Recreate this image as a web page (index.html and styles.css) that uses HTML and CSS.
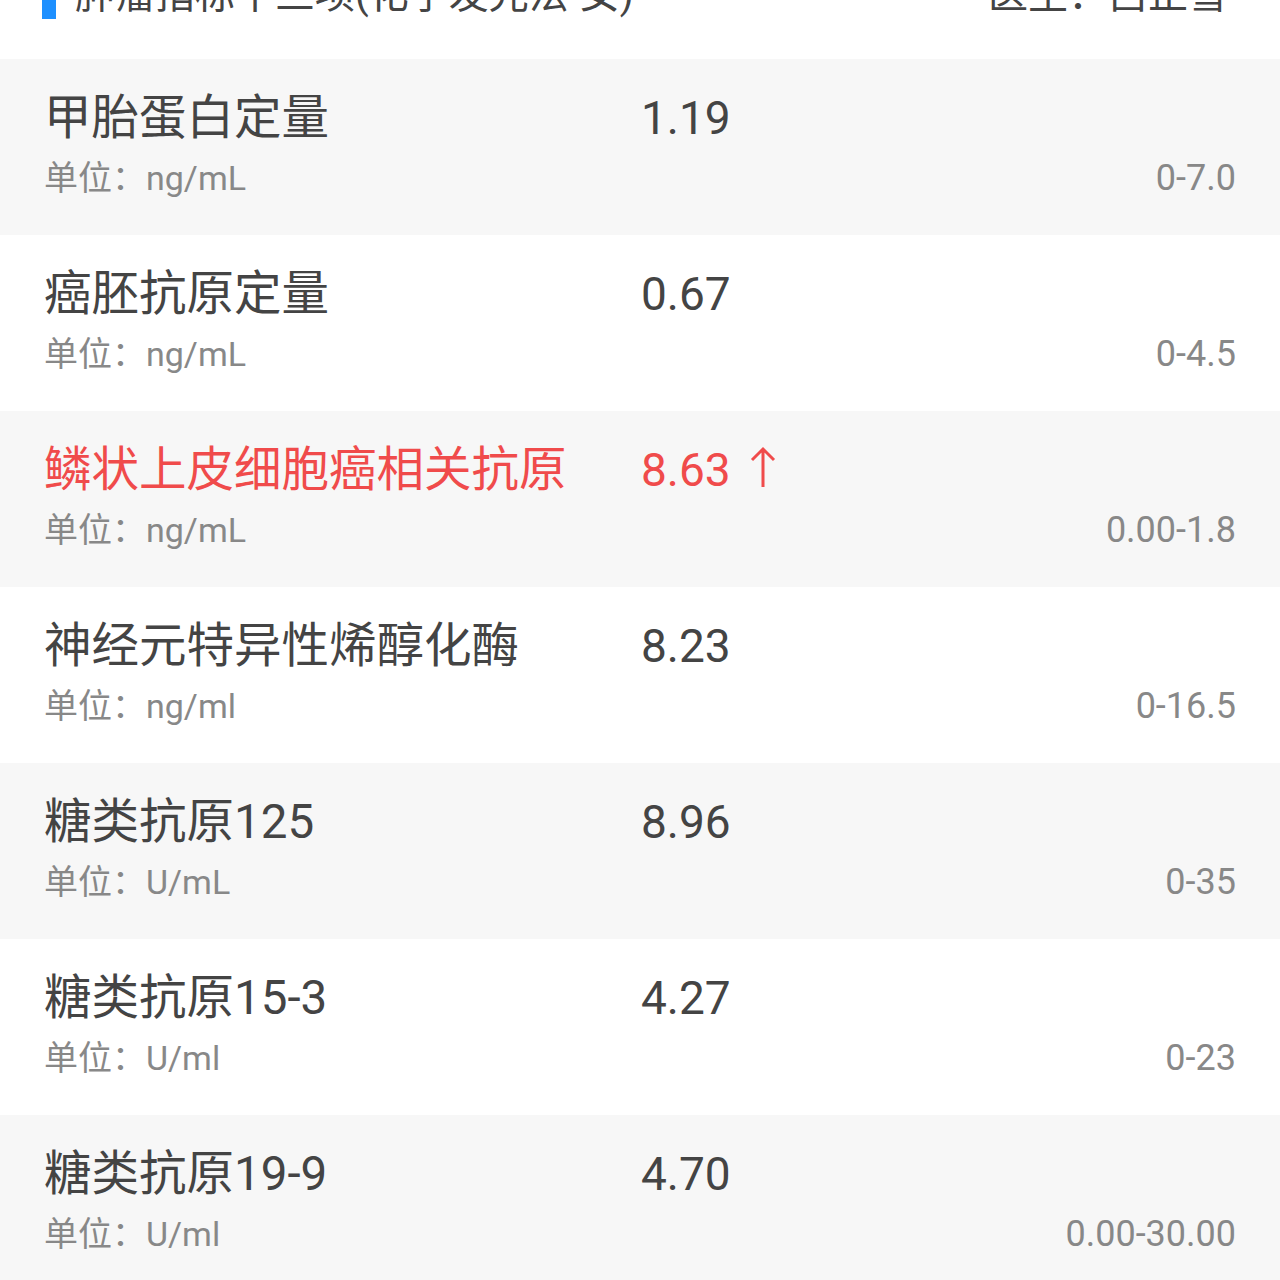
FILE: index.html
```html
<!DOCTYPE html>
<html lang="zh-CN">
<head>
    <meta charset="UTF-8">
    <meta name="viewport" content="width=device-width, initial-scale=1.0">
    <title>检验报告</title>
    <link rel="stylesheet" href="styles.css">
</head>
<body>
    <div class="report">
        <div class="report-head">
            <div class="report-title"><span class="title-mark"></span>肿瘤指标十三项(化学发光法-女)</div>
            <div class="report-doctor">医生：吕正雪</div>
        </div>

        <div class="item">
            <div class="item-name">甲胎蛋白定量</div>
            <div class="item-value">1.19</div>
            <div class="item-unit">单位：ng/mL</div>
            <div class="item-range">0-7.0</div>
        </div>
        <div class="item">
            <div class="item-name">癌胚抗原定量</div>
            <div class="item-value">0.67</div>
            <div class="item-unit">单位：ng/mL</div>
            <div class="item-range">0-4.5</div>
        </div>
        <div class="item high">
            <div class="item-name">鳞状上皮细胞癌相关抗原</div>
            <div class="item-value">8.63
                <svg class="arrow" width="26" height="42" viewBox="0 0 26 42">
                    <path d="M13 41 V3 M2 14 L13 3 L24 14" fill="none" stroke="currentColor" stroke-width="3"/>
                </svg>
            </div>
            <div class="item-unit">单位：ng/mL</div>
            <div class="item-range">0.00-1.8</div>
        </div>
        <div class="item">
            <div class="item-name">神经元特异性烯醇化酶</div>
            <div class="item-value">8.23</div>
            <div class="item-unit">单位：ng/ml</div>
            <div class="item-range">0-16.5</div>
        </div>
        <div class="item">
            <div class="item-name">糖类抗原125</div>
            <div class="item-value">8.96</div>
            <div class="item-unit">单位：U/mL</div>
            <div class="item-range">0-35</div>
        </div>
        <div class="item">
            <div class="item-name">糖类抗原15-3</div>
            <div class="item-value">4.27</div>
            <div class="item-unit">单位：U/ml</div>
            <div class="item-range">0-23</div>
        </div>
        <div class="item">
            <div class="item-name">糖类抗原19-9</div>
            <div class="item-value">4.70</div>
            <div class="item-unit">单位：U/ml</div>
            <div class="item-range">0.00-30.00</div>
        </div>
    </div>
</body>
</html>
```

FILE: styles.css
```css
body {
    margin: 0;
    background-color: #ffffff;
    font-family: Roboto, "Noto Sans CJK SC", sans-serif;
    color: #444444;
}

.report {
    width: 1280px;
}

/* Section header, scrolled half out of view */
.report-head {
    height: 59px;
    display: flex;
    justify-content: space-between;
    align-items: flex-start;
    padding: 0 52px 0 42px;
    box-sizing: border-box;
    overflow: hidden;
}

.report-title,
.report-doctor {
    font-size: 40px;
    line-height: 48px;
    margin-top: -29px;
    color: #444444;
    white-space: nowrap;
}

.report-title {
    display: flex;
    align-items: flex-end;
}

.title-mark {
    display: inline-block;
    width: 14px;
    height: 45px;
    background-color: #1e90ff;
    margin-right: 19px;
}

/* Result rows */
.item {
    display: grid;
    grid-template-columns: 597px 1fr auto;
    align-content: start;
    align-items: baseline;
    height: 176px;
    box-sizing: border-box;
    padding: 31px 44px 0 44px;
}

.item:nth-child(even) {
    background-color: #f7f7f7;
}

.item-name {
    font-size: 47.5px;
    line-height: 56px;
    color: #444444;
    white-space: nowrap;
}

.item-value {
    grid-column: 2 / 4;
    font-size: 46px;
    line-height: 56px;
    color: #444444;
}

.item-unit {
    grid-column: 1 / 3;
    font-size: 34px;
    line-height: 44px;
    margin-top: 10px;
    color: #888888;
}

.item-range {
    font-size: 36px;
    line-height: 44px;
    margin-top: 10px;
    color: #888888;
    text-align: right;
}

.high .item-name,
.high .item-value {
    color: #f04b4b;
}

.arrow {
    margin-left: 8px;
    vertical-align: -2px;
}
```
